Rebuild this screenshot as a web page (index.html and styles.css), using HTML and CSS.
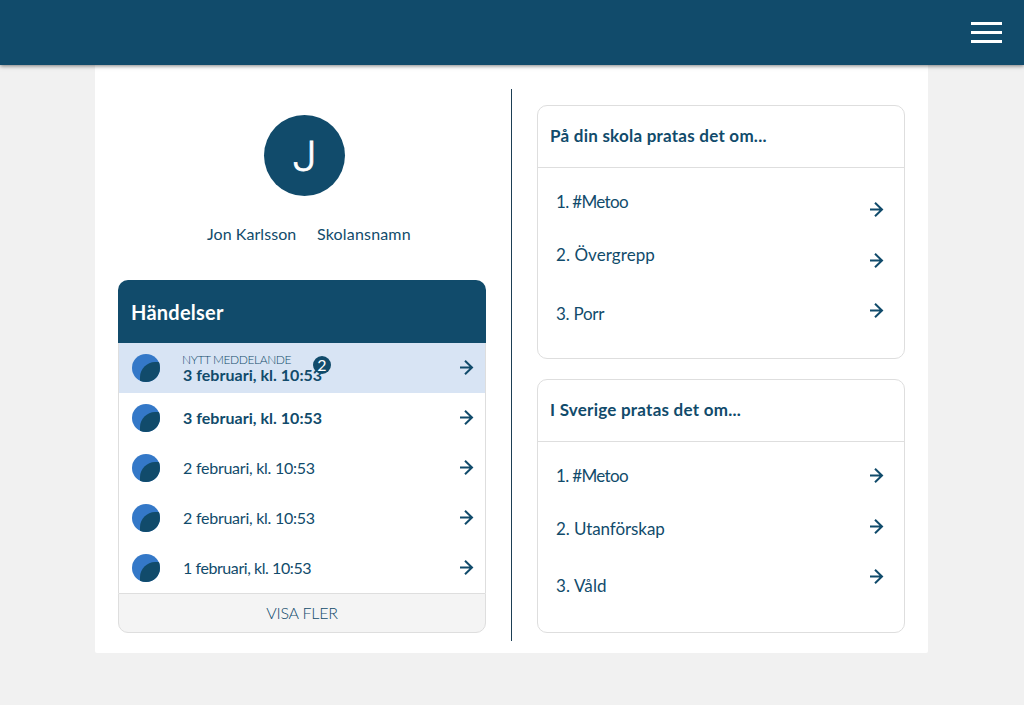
FILE: index.html
```html
<!DOCTYPE html>
<html lang="sv">
<head>
<meta charset="utf-8">
<title>Händelser</title>
<link rel="stylesheet" href="styles.css">
</head>
<body>
<svg class="defs" aria-hidden="true">
  <symbol id="arrow" viewBox="0 0 14 16"><path d="M0 7.5H12M5 .8L12 7.5L5 14.2" fill="none" stroke="currentColor" stroke-width="2"/></symbol>
  <symbol id="moon" viewBox="0 0 28 28"><clipPath id="disc"><circle cx="14" cy="14" r="14"/></clipPath><circle cx="14" cy="14" r="14" fill="#3478c8"/><path clip-path="url(#disc)" fill="#114b6b" d="M8 28V23C8 15 15 8 23 8H28V28Z"/></symbol>
</svg>
<header class="topbar"><button class="menu" aria-label="Meny"><span></span><span></span><span></span></button></header>
<main class="page">
  <section class="left">
    <div class="avatar"><span>J</span></div>
    <div class="names"><span class="name">Jon Karlsson</span><span class="school">Skolansnamn</span></div>
    <div class="events">
      <h2>Händelser</h2>
      <ul>
        <li class="new unread"><svg class="moon"><use href="#moon"/></svg><div class="info"><small>NYTT MEDDELANDE</small><span class="date">3 februari, kl. 10:53</span><b class="badge">2</b></div><svg class="arrow"><use href="#arrow"/></svg></li>
        <li class="unread"><svg class="moon"><use href="#moon"/></svg><div class="info"><span class="date">3 februari, kl. 10:53</span></div><svg class="arrow"><use href="#arrow"/></svg></li>
        <li><svg class="moon"><use href="#moon"/></svg><div class="info"><span class="date">2 februari, kl. 10:53</span></div><svg class="arrow"><use href="#arrow"/></svg></li>
        <li><svg class="moon"><use href="#moon"/></svg><div class="info"><span class="date">2 februari, kl. 10:53</span></div><svg class="arrow"><use href="#arrow"/></svg></li>
        <li><svg class="moon"><use href="#moon"/></svg><div class="info"><span class="date one">1 februari, kl. 10:53</span></div><svg class="arrow"><use href="#arrow"/></svg></li>
      </ul>
      <a class="more"><span>VISA FLER</span></a>
    </div>
  </section>
  <div class="divider"></div>
  <section class="right">
    <article class="topics school-topics">
      <h3><span class="t1">På din skola pratas det om...</span></h3>
      <div class="body">
        <div class="labels"><span class="metoo">1. #Metoo</span><span class="over">2. Övergrepp</span><span class="porr">3. Porr</span></div>
        <div class="arrows"><svg class="arrow"><use href="#arrow"/></svg><svg class="arrow"><use href="#arrow"/></svg><svg class="arrow"><use href="#arrow"/></svg></div>
      </div>
    </article>
    <article class="topics country-topics">
      <h3><span class="t2">I Sverige pratas det om...</span></h3>
      <div class="body">
        <div class="labels"><span class="metoo">1. #Metoo</span><span class="utan">2. Utanförskap</span><span class="vald">3. Våld</span></div>
        <div class="arrows"><svg class="arrow"><use href="#arrow"/></svg><svg class="arrow"><use href="#arrow"/></svg><svg class="arrow"><use href="#arrow"/></svg></div>
      </div>
    </article>
  </section>
</main>
</body>
</html>
```
FILE: styles.css
```css
* { box-sizing: border-box; }
body { margin: 0; background: #f1f1f1; color: #114b6b; font: 16px/20px Lato, "Open Sans", sans-serif; }
h2, h3, ul { margin: 0; padding: 0; list-style: none; }
.defs { position: absolute; width: 0; height: 0; }
.topbar { position: relative; height: 65px; padding: 22px 22px 0 0; display: flex; justify-content: flex-end; align-items: flex-start; background: #114b6b; box-shadow: 0 1px 4px rgba(0,0,0,.5); }
.menu { width: 31px; padding: 0; border: 0; background: none; display: grid; gap: 6px; }
.menu span { height: 3px; background: #fff; }
.page { width: 833px; height: 588px; margin-left: 95px; background: #fff; border-radius: 0 0 2px 2px; display: flex; }
.left { width: 391px; padding: 50px 0 0 23px; }
.avatar { width: 81px; height: 81px; margin-left: 146px; border-radius: 50%; background: #114b6b; color: #fff; display: flex; justify-content: center; font-family: Roboto, sans-serif; font-size: 43px; font-weight: 300; line-height: 83px; -webkit-text-stroke: .8px #fff; }
.names { display: flex; gap: 21px; padding: 28px 0 0 89px; white-space: nowrap; }
.names span { height: 20px; }
.name { width: 89px; letter-spacing: .06px; }
.school { letter-spacing: .18px; }
.events { margin-top: 36px; width: 368px; }
h2 { height: 63px; padding: 0 13px; background: #114b6b; color: #fff; border-radius: 10px 10px 0 0; font-size: 20px; line-height: 65px; letter-spacing: .25px; }
.events ul { border: solid #dedede; border-width: 0 1px; }
.events li { height: 50px; padding: 0 11px 0 13px; display: flex; align-items: center; }
.events .new { background: #d8e4f4; }
.moon { width: 28px; height: 28px; flex: none; }
.info { position: relative; margin-left: 23px; flex: 1; display: flex; flex-direction: column; align-items: flex-start; white-space: nowrap; letter-spacing: -.25px; }
.date.one { letter-spacing: -.43px; }
.unread .date { font-weight: 700; letter-spacing: .03px; }
.info small { font-size: 12px; line-height: 14px; font-weight: 300; letter-spacing: -.4px; margin: 0 0 0 -1px; }
.new .info { padding-bottom: 1px; }
.new .date { line-height: 16px; }
.badge { position: absolute; left: 130px; top: 3px; width: 18px; height: 18px; border-radius: 50%; background: #114b6b; color: #fff; font-size: 16px; line-height: 17px; font-weight: 400; letter-spacing: 0; text-align: center; }
.arrow { width: 14px; height: 16px; flex: none; display: block; }
.more { height: 40px; display: flex; justify-content: center; align-items: center; background: #f4f4f4; border: 1px solid #dedede; border-radius: 0 0 10px 10px; font-weight: 300; letter-spacing: -.2px; }
.divider { width: 1px; height: 552px; margin: 24px 0 0 25px; background: #1d3f55; }
.right { width: 368px; margin: 40px 0 0 25px; display: grid; gap: 20px; align-content: start; }
.topics { height: 254px; border: 1px solid #dedede; border-radius: 10px; }
h3 { height: 62px; padding: 0 12px; border-bottom: 1px solid #dedede; font-size: 17px; line-height: 60px; white-space: nowrap; letter-spacing: .24px; }
.body { display: flex; justify-content: space-between; padding: 0 20px 0 18px; }
.labels { display: grid; grid-template-rows: 53px 59px 20px; padding-top: 24px; font-size: 17px; white-space: nowrap; }
.labels span { justify-self: start; }
.metoo { letter-spacing: -.65px; }
.over { letter-spacing: .08px; }
.porr { letter-spacing: -.25px; }
.utan { letter-spacing: -.08px; }
.vald { letter-spacing: .12px; }
.arrows { display: grid; grid-template-rows: 51px 50px 16px; padding-top: 34px; }
.country-topics .labels { grid-template-rows: 53px 57px 20px; }
.country-topics .arrows { padding-top: 26px; }
```
